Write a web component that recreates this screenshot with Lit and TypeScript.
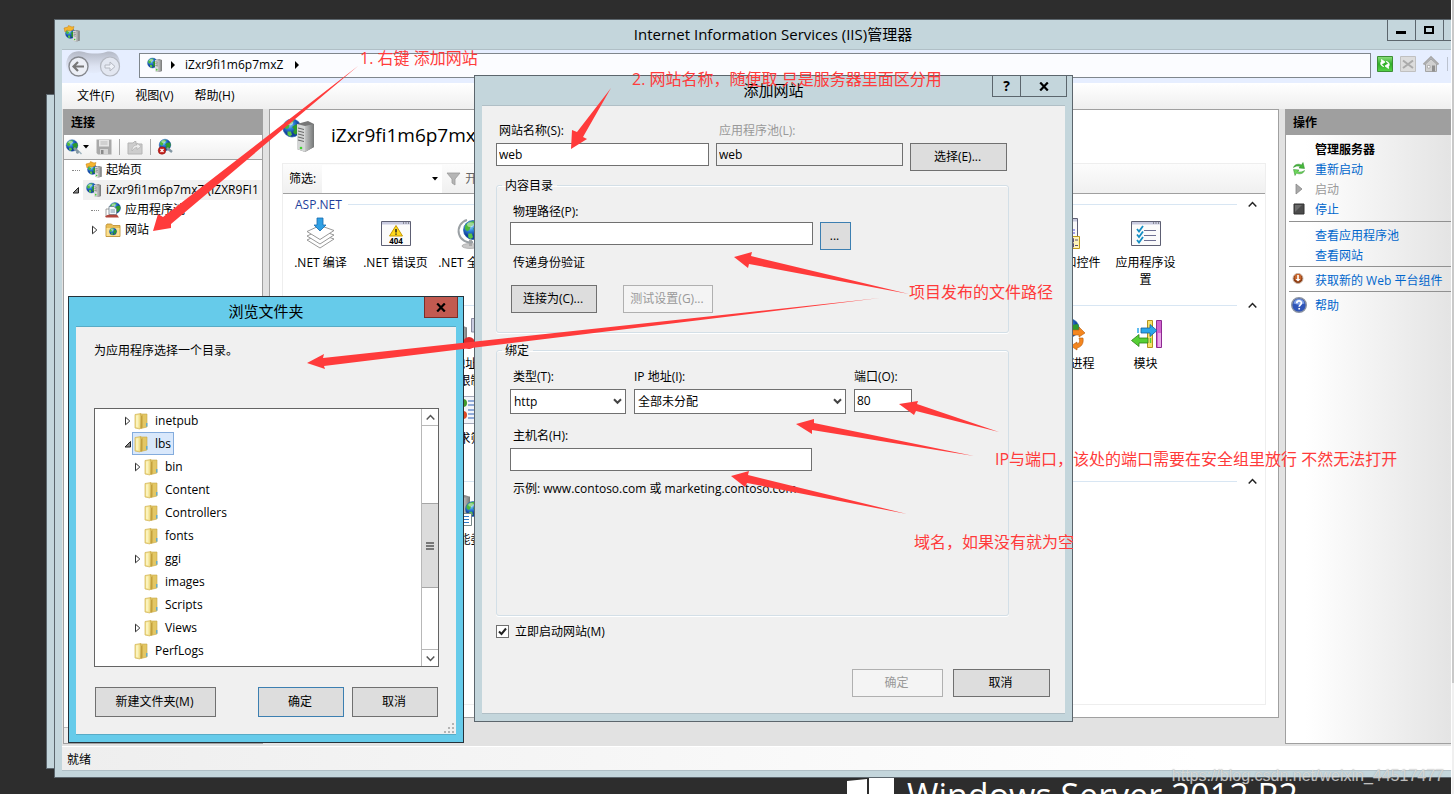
import { LitElement, html, svg, css, nothing } from "lit";
import { customElement } from "lit/decorators.js";
import { classMap } from "lit/directives/class-map.js";

const globe = (cx: number, cy: number, r: number) => svg`
  <g transform="translate(${cx} ${cy}) scale(${r / 8})">
    <circle r="8" fill="url(#sea)" stroke="#1b5fa8" stroke-width=".6"/>
    <path d="M-6.500-4C-4-7 0-8 2-7L0-4-2-3-3 0-5 1-7-1z" fill="#4db83c"/>
    <path d="M3-3L7-3.500 8 0 6 4 3 6 1 4 2 1 0-1z" fill="#2f9a2c"/>
    <path d="M-4 3L-1 3 0 6-2 7.500-4 6z" fill="#58c445"/>
    <ellipse cx="-2" cy="-4.500" rx="3" ry="2" fill="#fff" opacity=".45"/>
  </g>`;

const tower = (x: number, y: number, w: number, h: number) => svg`
  <g transform="translate(${x} ${y}) scale(${w / 8} ${h / 14})">
    <path d="M0 1L5 0 8 1V13L4 14 0 13z" fill="#8d8d8d"/>
    <path d="M0 1L4 1.500V14L0 13z" fill="#d9d9d9"/>
    <path d="M4 1.500L8 1V13L4 14z" fill="url(#steel)"/>
    <path d="M.5 3L3.500 3.500M.5 5L3.500 5.500M.5 7L3.500 7.500" stroke="#6b6b6b" stroke-width=".8"/>
    <circle cx="2" cy="11.500" r=".9" fill="#3fd22c"/>
  </g>`;

const art: Record<string, unknown> = {
  server: svg`${globe(5.5, 6, 5)}${tower(8, 2, 7, 13)}`,
  start: svg`${globe(6.5, 7.5, 5)}${tower(9, 4, 6.5, 11.5)}<path d="M0 2L4 1 4.500-.5 8 1 10 .5 9 4 6 5 3 4 1 6z" fill="#f5b52e" stroke="#c77d0c" stroke-width=".5"/>`,
  connect: svg`${globe(6, 6.5, 5.800)}<path d="M8 9L13 13.500M12 11.500L11 14.500" stroke="#8397a3" stroke-width="2.400"/><path d="M13 12.500L15.500 15" stroke="#9fb3bd" stroke-width="1.500"/>`,
  disconnect: svg`${globe(7, 6, 5.800)}<path d="M9 9L14 13" stroke="#8397a3" stroke-width="2.400"/><circle cx="4" cy="11.500" r="3.800" fill="#c4201c" stroke="#861310" stroke-width=".5"/><path d="M2.500 10L5.500 13M5.500 10L2.500 13" stroke="#fff" stroke-width="1.200"/>`,
  save: svg`<path d="M.5.5H15.500V15.500H2L.5 14z" fill="#a9a9a9"/><path d="M3 1H13V7.500H3z" fill="#e6e6e6"/><path d="M4.500 3H11.500M4.500 5H11.500" stroke="#bbb"/><path d="M4 10H12V15.500H4z" fill="#d4d4d4"/><path d="M5 11H7.500V15H5z" fill="#8a8a8a"/>`,
  openFolder: svg`<path d="M1 4H6L7.500 2.500H9V5H15V15H1z" fill="#cdcdcd" stroke="#b4b4b4"/><path d="M5 12C5 8 7 6 10 6V4L14 7.500 10 10.500V8.500C8 8.500 6.500 10 5 12z" fill="#ececec" stroke="#aaa" stroke-width=".6"/>`,
  pools: svg`${globe(10, 6, 5.500)}<path d="M1 7H8.500V14H1z" fill="#fff" stroke="#888" stroke-width=".8"/><path d="M4 4.500H9L11.500 7V12.500H4z" fill="#f4f8fb" stroke="#6d7f8c" stroke-width=".8"/><path d="M5.500 8H10M5.500 10H10" stroke="#5c7f9b" stroke-width=".8"/><path d="M0 14.500L3 12.800H12L14 15.500H1z" fill="#b3473d"/>`,
  sites: svg`<path d="M1 3.500L2 2H6.500L8 3.500H15V14.500H1z" fill="#e9bd55" stroke="#b98a2b" stroke-width=".8"/><path d="M1.500 6H14.500V14H1.500z" fill="#fbe08f"/>${globe(8, 9.500, 3.600)}`,
  compile: svg`<g fill="#fff" stroke="#8c8c8c" stroke-width=".9"><path d="M2 23L15 17 29 22 15 31z"/><path d="M2 19L15 13 29 18 15 27z"/><path d="M2 14.500L15 8.500 29 13.500 15 22.500z"/></g><path d="M12 1H18V8H21L15 14 9 8H12z" fill="#2fa0e4" stroke="#1669ad" stroke-width=".8"/>`,
  error404: svg`<path d="M1.500 4.500H30.500V28.500H1.500z" fill="#fbfbfb" stroke="#5d5f73"/><path d="M2 5H30V7.500H2z" fill="#c9cbe0"/><path d="M23 6H24M25.500 6H26.500M28 6H29" stroke="#444" stroke-width="1.200"/><path d="M16 8.500L22.500 19H9.500z" fill="#ffd91c" stroke="#c79a06"/><path d="M16 12V15.500M16 16.600V17.800" stroke="#222" stroke-width="1.500"/><text x="16" y="27" text-anchor="middle" class="code">404</text>`,
  globeStand: svg`<ellipse cx="15" cy="29" rx="8" ry="2.500" fill="#c9c9c9" stroke="#999" stroke-width=".6"/><path d="M14 23H17V29H14z" fill="#aaa"/><path d="M12 3A11 11 0 0 0 18 25" fill="none" stroke="#9aa0a4" stroke-width="2"/>${globe(18, 13, 9.500)}`,
  pageControls: svg`<path d="M.5 1.500H22.500V30.500H.5z" fill="#fafafa" stroke="#5d5f73"/><path d="M1 2H22V4.500H1z" fill="#c9cbe0"/><path d="M3 13H20M3 16H20" stroke="#4a4ae0"/><path d="M8.500 19.500H24.500V31.500H8.500z" fill="#fdf4b8" stroke="#bf9a1a"/><path d="M14.500 21.500H18.500V25H14.500zM14.500 26.500H18.500V30H14.500z" fill="#fff" stroke="#5c4f78"/><path d="M20 23H23M20 28.500H23" stroke="#5c4f78"/>`,
  settings: svg`<path d="M1.500 4.500H30.500V28.500H1.500z" fill="#fbfbfb" stroke="#5d5f73"/><path d="M2 5H30V7.500H2z" fill="#c9cbe0"/><path d="M23 6H24M25.500 6H26.500M28 6H29" stroke="#444" stroke-width="1.200"/><path d="M14 13.500H26M14 18.500H26M14 23.500H26" stroke="#6d6f92" stroke-width="1.200"/><path d="M7 12L9 14.500 13 9M7 17.500L9 20 13 14.500M7 23L9 25.500 13 20" fill="none" stroke="#158ec4" stroke-width="1.800"/>`,
  ipLimit: svg`${tower(2, 8, 10, 20)}<path d="M16.500.5H30V14H16.500z" fill="#c9cce0" stroke="#8a8ca0"/><path d="M19 3H29V11H19z" fill="#12129a"/><path d="M21 14H26V17H21z" fill="#999"/><circle cx="14" cy="25" r="6" fill="#e02b2b"/>`,
  worker: svg`${globe(15, 10, 9)}<path d="M14 12L24 12 24 9 30 15 24 19V17H16z" fill="#f4861f" stroke="#b85a08" stroke-width=".6"/><path d="M28 20C29 26 26 29 22 30V32L16 28 22 24V26C25 25 25 23 24 20z" fill="#f4861f" stroke="#b85a08" stroke-width=".6"/>`,
  modules: svg`<path d="M17.500 2.500H22.500V29.500H17.500z" fill="#f5e26a" stroke="#b4941c"/><path d="M26.500 2.500H31.500V29.500H26.500z" fill="#d263cf" stroke="#8d2a91"/><path d="M28 15H31V29H28z" fill="#eba8ea"/><path d="M11 10H20V6.500L27 12.500 20 18.500V15H11z" fill="#2ba6ea" stroke="#145f9d" stroke-width=".8"/><path d="M8 10V15" stroke="#2ba6ea" stroke-width="1.500"/><path d="M18 20H9V16.500L1.500 22.500 9 28.500V25H18z" fill="#56cf35" stroke="#2b8018" stroke-width=".8"/><path d="M20.500 20V25" stroke="#56cf35" stroke-width="1.500"/>`,
  request: svg`<path d="M3.500 3.500H30.500V30.500H3.500z" fill="#f3f5fa" stroke="#a4a8b8"/><path d="M13 8H28M13 12H28M13 17H28M13 21H28M13 25H28" stroke="#2e62b8" stroke-width="1.200"/><circle cx="8" cy="10" r="4" fill="#3e9a2c"/><circle cx="8" cy="22" r="4" fill="#dc4a24"/>`,
  delegate: svg`${tower(1, 1, 14, 26)}${globe(18, 15, 7.5)}<path d="M6.500 19.500H16.500V31.500H6.500z" fill="#fff" stroke="#788"/><path d="M9 22.500H14M9 25.500H14M9 28.500H14" stroke="#2e7ac8"/>`,
  bigServer: svg`${globe(10, 9, 9)}<path d="M15 5L26 2 32 5V28L23 33 15 30z" fill="#777"/><path d="M15 5L23 7V33L15 30z" fill="#d4d6d6"/><path d="M23 7L32 5V28L23 33z" fill="url(#steel)"/><path d="M16 9L22 10.500M16 12L22 13.500M16 15L22 16.500M16 18L22 19.500M16 21L22 22.500" stroke="#666"/><circle cx="19" cy="29" r="1.300" fill="#3fd22c"/>`,
  refresh: svg`<path d="M.5.5H15.500V15.500H.5z" fill="url(#leaf)" stroke="#3c8f35"/><path d="M6.800 10.500C3.500 10 3 7 4.500 5.500V3.500L8 6 4.500 8.500 5 9z M9.200 5.500C12.500 6 13 9 11.500 10.500V12.500L8 10 11.500 7.500 11 7z" fill="#fff" stroke="#fff" stroke-width=".8"/>`,
  stopGrey: svg`<path d="M.5.5H15.500V15.500H.5z" fill="#dcdcdc" stroke="#c0c0c0"/><path d="M3 4.500L13 12M13 4.500L3 12" stroke="#aaa" stroke-width="2"/>`,
  home: svg`<path d="M2.500 8V15.500H13.500V8L8 3z" fill="#d0d0d0" stroke="#a5a5a5"/><path d="M.5 8.500L8 1 15.500 8.500" fill="none" stroke="#a8a8a8" stroke-width="1.800"/><path d="M9 9.500H12V15.500H9z" fill="#8f8f8f"/><path d="M4.500 9.500H7V12H4.500z" fill="#fff" stroke="#999" stroke-width=".6"/>`,
  restart: svg`<path d="M2.500 6.500C3.500 3 8 2.500 10.500 4L12 1.500 13.500 7.500 8 7 9.300 5.500C7 4.500 4.500 5 2.500 6.500z" fill="#47b83c" stroke="#2a8a26" stroke-width=".5"/><path d="M13.500 9.500C12.500 13 8 13.500 5.500 12L4 14.500 2.500 8.500 8 9 6.700 10.500C9 11.500 11.500 11 13.500 9.500z" fill="#6fd85c" stroke="#2a8a26" stroke-width=".5"/>`,
  play: svg`<path d="M5 3L11 8 5 13z" fill="#a9a9a9" stroke="#888" stroke-width=".8"/>`,
  stop: svg`<path d="M3 3H13V13H3z" fill="#4b4b4b" stroke="#333"/><path d="M4 11L11 4H4z" fill="#6b6b6b"/>`,
  get: svg`<circle cx="7" cy="6.500" r="5" fill="#8e3e14" stroke="#c9b5a8" stroke-width="1"/><circle cx="7" cy="5.500" r="3.400" fill="#c9672d"/><path d="M6.200 3H7.800V7H9.500L7 9.500 4.500 7H6.200z" fill="#fff"/>`,
  help: svg`<circle cx="8" cy="8" r="7.300" fill="#2f55b8" stroke="#8b93a2" stroke-width="1.400"/><path d="M2.500 6.500A5.600 5.600 0 0 1 13.500 6.500C10 8 6 8 2.500 6.500z" fill="#7e9fe6"/><path d="M5.800 6.200C5.800 3.200 10.400 3.200 10.400 6 10.400 7.800 8.200 7.800 8.200 9.800M8.200 11V12.600" fill="none" stroke="#fff" stroke-width="1.700"/>`,
  folder: svg`<path d="M1 1.500L7 .5V14L6 16 1 15z" fill="#f1df8b" stroke="#d1b354" stroke-width=".7"/><path d="M6 1L13 1V14L7 15.500V3z" fill="#e3c765" stroke="#c8a746" stroke-width=".6"/><path d="M2 2.500L4.500 2V14.500L2 14z" fill="#fbf3bd"/><path d="M7 3L8.500 2V14.500L6.500 16z" fill="#c3a03c"/><path d="M12.800 10V13.500" stroke="#49a7e0" stroke-width="1.200"/>`,
  funnel: svg`<path d="M1 2H14L9 8V14L6 12V8z" fill="#b5b5b5" stroke="#9a9a9a" stroke-width=".8"/>`,
};

const icon = (name: string, size = 16) =>
  html`<svg class="icon" width=${size} height=${size} viewBox="0 0 ${size} ${size}" aria-hidden="true">${art[name]}</svg>`;

const chevron = (dir: "up" | "down") =>
  html`<svg width="9" height="7" viewBox="0 0 9 7" aria-hidden="true"><path d=${dir === "up" ? "M.7 5.500L4.500 1.500 8.300 5.500" : "M.7 1.500L4.500 5.500 8.300 1.500"} fill="none" stroke="currentColor" stroke-width="1.500"/></svg>`;

const twisty = (state?: string) =>
  html`<svg class="icon" width="8" height="10" viewBox="0 0 8 10" aria-hidden="true">${
    state === "closed" ? svg`<path d="M1.500 1.200L5.800 5 1.500 8.800z" fill="#fff" stroke="#333"/>`
    : state === "open" ? svg`<path d="M6.500 2.500V8H1z" fill="#8a8a8a" stroke="#222"/>` : nothing}</svg>`;

const closeMark = html`<svg width="10" height="9" viewBox="0 0 10 9" aria-hidden="true"><path d="M1.200.5L8.800 8.500M8.800.5L1.200 8.500" stroke="#000" stroke-width="2.200"/></svg>`;

interface Tile { col: number; row?: number; icon: string; label: string; }
const groups: { title: string; tiles: Tile[] }[] = [
  { title: "ASP.NET", tiles: [
    { col: 1, icon: "compile", label: ".NET 编译" },
    { col: 2, icon: "error404", label: ".NET 错误页" },
    { col: 3, icon: "globeStand", label: ".NET 全球化" },
    { col: 11, icon: "pageControls", label: "页面和控件" },
    { col: 12, icon: "settings", label: "应用程序设\n置" },
  ] },
  { title: "IIS", tiles: [
    { col: 3, icon: "ipLimit", label: "IP 地址和域\n限制" },
    { col: 11, icon: "worker", label: "工作进程" },
    { col: 12, icon: "modules", label: "模块" },
    { col: 3, row: 2, icon: "request", label: "请求筛选" },
  ] },
  { title: "管理", tiles: [{ col: 3, icon: "delegate", label: "功能委派" }] },
];

const folders = [
  { name: "inetpub", state: "closed" },
  { name: "lbs", state: "open", selected: true },
  { name: "bin", state: "closed", deep: true },
  { name: "Content", deep: true },
  { name: "Controllers", deep: true },
  { name: "fonts", deep: true },
  { name: "ggi", state: "closed", deep: true },
  { name: "images", deep: true },
  { name: "Scripts", deep: true },
  { name: "Views", state: "closed", deep: true },
  { name: "PerfLogs" },
  { name: "" },
];

const arrows = [
  "153,231 158,214 163,217 358,66 171,224 171,228",
  "571,149 572,130 577,132 611,88 583,137 587,139",
  "734,257 752,252 751,256 909,294 749,264 748,268",
  "307,363 324,354 323,358 880,298 324,366 325,369",
  "899,404 918,401 917,404 999,432 916,411 914,415",
  "796,424 814,419 814,423 974,456 812,430 812,434",
  "731,476 749,471 748,475 907,514 747,483 745,487",
];
const notes = [
  { x: 360, y: 64, text: "1. 右键 添加网站" },
  { x: 632, y: 85, text: "2. 网站名称，随便取 只是服务器里面区分用" },
  { x: 909, y: 298, text: "项目发布的文件路径" },
  { x: 995, y: 465, text: "IP与端口，该处的端口需要在安全组里放行 不然无法打开" },
  { x: 914, y: 548, text: "域名，如果没有就为空" },
];

@customElement("app-root")
export class AppRoot extends LitElement {
  static styles = css`
    :host { display: block; position: relative; height: 100vh; overflow: hidden; background: #2d2d2d; color: #000;
      font: 12px/17px "Open Sans", "Noto Sans CJK SC", sans-serif; }
    * { box-sizing: border-box; }
    button, input, select { font: inherit; color: inherit; margin: 0; border-radius: 0; }
    h1, h2, p, ul { margin: 0; padding: 0; font-weight: 400; list-style: none; }
    a { color: #0066cc; text-decoration: none; }
    .icon { flex: none; overflow: visible; display: block; }
    .defs { position: absolute; width: 0; height: 0; }
    .code { font: bold 8px "Open Sans", sans-serif; }

    .brand { position: absolute; left: 847px; bottom: -30px; display: flex; gap: 13px; color: #fff; align-items: flex-start; white-space: nowrap; }
    .brand p { font-size: 34px; line-height: 38px; }
    .behind { position: absolute; left: 46px; top: 94px; bottom: 25px; width: 60px; background: #c4d6dc; border: 1px solid #5c666d; }

    .window { position: absolute; display: flex; flex-direction: column; background: #c4d6dc; border: 1px solid #5c666d; }
    .titlebar { display: grid; grid-template-columns: 1fr auto 1fr; height: 29px; flex: none; }
    .titlebar h1 { grid-column: 2; font-size: 15px; line-height: 28px; white-space: nowrap; }
    .sys { grid-column: 3; display: flex; justify-content: flex-end; align-items: flex-start; margin-right: -2px; }
    .sys button { display: grid; place-items: center; width: 28px; height: 21px; padding: 0; background: none; border: 1px solid #5c666d; border-width: 0 0 1px 1px; font-weight: 700; font-size: 14px; line-height: 18px; }
    .sys button.wide { width: 47px; border-right-width: 1px; }
    .main .sys { margin-right: -6px; }
    .client { flex: 1; min-height: 0; display: flex; flex-direction: column; border: 1px solid #b0bfc6; border-width: 1px 0; background: #f0f0f0; }

    .main { left: 54px; top: 19px; right: -38px; bottom: 16px; padding: 0 7px 6px; }
    .main .titlebar .icon { margin: 6px 0 0 2px; }
    .nav { display: flex; align-items: center; height: 33px; flex: none; padding: 0 8px 2px 0; background: #e6eeff; }
    .travel { width: 62px; height: 33px; flex: none; }
    .address { flex: 1; display: flex; align-items: center; gap: 8px; height: 25px; margin: 0 6px 0 15px; padding: 0 0 2px 7px; border: 1px solid #7f868c; background: #fbfcff; }
    .address span { padding: 0 4px 0 2px; }
    .navtools { display: flex; gap: 7px; width: 99px; padding-bottom: 3px; }
    .navtools i { width: 1px; height: 14px; margin: 1px 0 0 1px; background: #bcc3cf; }
    .navtools button, .tools button { padding: 0; border: 0; background: none; display: flex; align-items: center; }
    .menu { display: flex; gap: 21px; padding: 0 15px; height: 26px; line-height: 26px; flex: none; background: linear-gradient(#fff, #efefef); }
    .menu button { border: 0; padding: 0; background: none; }
    .panes { flex: 1; min-height: 0; display: grid; grid-template-columns: 200px minmax(0, 1fr) 199px; gap: 6px; background: #e2e2e2; padding: 0 0 2px 1px; }
    .head { height: 26px; flex: none; padding-left: 7px; line-height: 27px; background: #9f9f9f; font-weight: 600; font-size: 12px; }
    .left { display: flex; flex-direction: column; border: 1px solid #a0a0a0; border-top: 0; background: #fff; min-height: 0; overflow: hidden; }
    .tools { display: flex; align-items: center; gap: 7px; height: 25px; flex: none; padding-left: 2px; border-bottom: 1px solid #a0a0a0; background: linear-gradient(#fff, #efefef); }
    .tools i { width: 1px; height: 16px; background: #a9a9a9; }
    .tree { flex: 1; }
    .tree li { display: flex; align-items: center; gap: 3px; height: 20px; padding-left: 8px; white-space: nowrap; }
    .tree li > span { display: flex; align-items: center; height: 20px; gap: 4px; padding: 0 0 1px 3px; }
    .tree .dots { width: 8px; height: 1px; border-top: 1px dotted #888; }
    .tree .child { padding-left: 27px; }
    .tree .sel { flex: 1; background: #f0f0f0; }
    .hscroll { height: 16px; flex: none; border-top: 1px solid #bbb; background: #eee; }

    .center { display: flex; flex-direction: column; margin-bottom: 26px; padding: 0 12px 12px; border: 1px solid #a0a0a0; background: #fff; min-height: 0; }
    .heading { display: flex; align-items: center; gap: 15px; height: 53px; padding-bottom: 2px; }
    .heading h2 { padding-bottom: 2px; font-size: 19px; line-height: 26px; white-space: nowrap; }
    .features { flex: 1; min-height: 0; overflow: hidden; border: 1px solid #eee; }
    .filter { display: flex; align-items: center; height: 30px; margin-bottom: 1px; padding-left: 6px; border-bottom: 1px solid #a0a0a0; background: linear-gradient(#fcfcfc, #f0f0f0); }
    .filter input { width: 106px; height: 28px; margin-left: 6px; border: 0; background: #fff; padding: 0 4px; }
    .filter .drop { display: grid; place-items: center; width: 14px; height: 28px; padding: 0; border: 0; background: #fff; }
    .filter .go { display: flex; gap: 3px; align-items: center; border: 0; background: none; padding: 0 4px; color: #666; }
    .group { padding-bottom: 8px; }
    .group h3 { display: flex; align-items: center; gap: 6px; height: 18px; margin: 0; padding: 0 7px 0 12px; font-weight: 400; font-size: 12px; color: #1f3f9c; }
    .group h3 i { flex: 1; height: 1px; margin-right: 3px; background: #d8e6f3; }
    .group h3 button { display: grid; place-items: center; border: 0; padding: 0; width: 12px; height: 16px; background: none; color: #222; }
    .grid { display: grid; grid-template-columns: repeat(12, 75px); grid-auto-rows: 75px; }
    .tile { display: flex; flex-direction: column; align-items: center; gap: 5px; padding-top: 4px; text-align: center; color: #000; white-space: pre; }

    .right { display: flex; flex-direction: column; border: 1px solid #a0a0a0; border-top: 0; background: linear-gradient(90deg, #fff 10%, #dedede); }
    .right ul { padding: 4px 0 2px 5px; }
    .right li { display: flex; align-items: center; gap: 8px; height: 20px; white-space: nowrap; }
    .right ul + ul { border-top: 1px solid #919191; margin-left: 3px; padding: 3px 0 1px 2px; }
    .right li b, .right li .bare { padding-left: 24px; }
    .right li b { font-weight: 600; }
    .right .off { color: #999; }
    .status { height: 24px; flex: none; padding-left: 5px; line-height: 26px; border-top: 1px solid #fff; background: linear-gradient(90deg, #eee, #fff 80%); }

    .box { height: 23px; padding: 0 2px; border: 1px solid #707070; background: #fff; width: 100%; }
    .box[readonly] { background: #f0f0f0; }
    .btn { height: 28px; padding: 0 2px 1px 0; border: 1px solid #707070; background: #ddd; }
    .btn:disabled { border-color: #b0b0b0; background: #f4f4f4; color: #999; }
    .btn.focus { border-color: #3c7fb1; }

    .add { left: 474px; top: 75px; width: 599px; padding: 0 7px 7px; }
    .form { padding: 16px 0 16px 14px; }
    .add label.cap, .note { display: block; padding-left: 3px; white-space: nowrap; }
    .faded { color: #999; }
    .top { display: grid; grid-template-columns: 213px 187px 97px; column-gap: 7px; row-gap: 4px; align-items: start; }
    fieldset { width: 513px; min-width: 0; margin: 6px 0 0; padding: 9px 13px 0; border: 1px solid #d3dfe7; border-radius: 3px; box-shadow: 0 1px #fff, inset 0 1px #fff; }
    legend { padding: 0 4px 0 3px; margin-left: -8px; }
    .path { display: flex; align-items: flex-start; gap: 7px; margin: 2px 0 4px; }
    .path .box { width: 303px; }
    .path .btn { width: 31px; }
    .pair { display: flex; gap: 26px; padding: 14px 0 19px 1px; }
    .pair .connect { width: 86px; }
    .pair .test { width: 90px; }
    .bind { margin-top: 9px; padding-bottom: 118px; }
    .fields { display: grid; grid-template-columns: 116px 212px 58px; column-gap: 8px; row-gap: 4px; margin-bottom: 13px; }
    .fields label.cap { padding-left: 0; }
    .add label.first { padding-left: 3px; }
    select { appearance: none; height: 25px; padding: 0 20px 0 3px; border: 1px solid #707070;
      background: #fff url("data:image/svg+xml,%3Csvg xmlns='http://www.w3.org/2000/svg' width='9' height='7'%3E%3Cpath d='M1 1.200L4.500 4.800 8 1.200' fill='none' stroke='%23444' stroke-width='2'/%3E%3C/svg%3E") no-repeat right 3px center; }
    .host { width: 302px; margin: 4px 0 9px; display: block; }
    .check { display: flex; align-items: center; gap: 6px; margin-top: 7px; }
    .check input { appearance: none; width: 13px; height: 13px; border: 1px solid #707070;
      background: #fff url("data:image/svg+xml,%3Csvg xmlns='http://www.w3.org/2000/svg' width='11' height='11'%3E%3Cpath d='M2 5.500L4.500 8 9 2.500' fill='none' stroke='%23222' stroke-width='2'/%3E%3C/svg%3E") center no-repeat; }
    .foot { display: flex; justify-content: flex-end; gap: 10px; padding: 29px 15px 0 0; }
    .foot .ok { width: 91px; }
    .foot .cancel { width: 97px; }

    .browse { left: 68px; top: 296px; width: 396px; padding: 0 7px 7px; background: #66cbea; border-color: #26323a; }
    .browse .client { border-color: #58abc6; padding: 15px 17px 17px 18px; }
    .browse .sys button { width: 34px; background: #c25a50; border-color: #7b2e28; border-right-width: 1px; }
    .list { display: flex; height: 259px; margin-top: 49px; border: 1px solid #646464; background: #fff; }
    .list ul { flex: 1; overflow: hidden; padding-left: 29px; }
    .list li { display: flex; align-items: center; height: 23px; }
    .list li.deep { padding-left: 10px; }
    .list li > span { display: flex; align-items: center; gap: 5px; height: 23px; padding: 0 4px 0 1px; border: 1px solid transparent; white-space: nowrap; }
    .list li.selected > span { border-color: #84acdd; background: #d9e8fb; padding-right: 2px; }
    .bar { display: flex; flex-direction: column; width: 17px; border: 1px solid #b8b8b8; border-width: 0 0 0 1px; color: #555; background: #fff; }
    .bar button { display: grid; place-items: center; height: 17px; padding: 0; border: 1px solid #b8b8b8; border-width: 0 0 1px; background: #fff; color: #555; }
    .bar .down { border-width: 1px 0 0; }
    .thumb { display: grid; place-items: center; height: 85px; margin: 77px 0 auto; border: 1px solid #a6a6a6; border-width: 1px 0; background: #dcdcdc; }
    .actions { display: flex; gap: 8px; padding: 20px 1px 0 1px; }
    .actions .btn { height: 30px; width: 86px; }
    .actions .new { width: 121px; margin-right: auto; }
    .grip { position: absolute; right: 9px; bottom: 9px; }

    .marks { position: absolute; inset: 0; width: 100%; height: 100%; pointer-events: none; fill: #ff3b3b; }
    .marks text { font-size: 16px; }
    .watermark { position: absolute; right: 10px; bottom: 8px; font: 16px/20px "Liberation Sans", sans-serif; color: rgba(230, 230, 230, .75); text-shadow: 0 0 1px rgba(120, 120, 120, .5); }
    .page-scroll { position: absolute; inset: 0 0 0 auto; width: 3px; background: #f0f0f0; border-left: 1px solid #fff; }
    .page-scroll i { display: block; height: 86%; background: #c9c9c9; }
  `;

  private renderGroups() {
    return groups.map((g) => html`
      <section class="group">
        <h3>${g.title}<i></i><button aria-label="折叠">${chevron("up")}</button></h3>
        <div class="grid">${g.tiles.map((t) => html`
          <a class="tile" href="#" style="grid-column:${t.col};grid-row:${t.row ?? 1}">${icon(t.icon, 32)}<span>${t.label}</span></a>`)}</div>
      </section>`);
  }

  private renderMain() {
    return html`
      <section class="window main">
        <header class="titlebar">
          ${icon("start", 16)}
          <h1>Internet Information Services (IIS)管理器</h1>
          <div class="sys">
            <button aria-label="最小化"><svg width="11" height="10" viewBox="0 0 11 10"><path d="M0 6H10V9H0z"/></svg></button>
            <button aria-label="最大化"><svg width="11" height="10" viewBox="0 0 11 10"><path d="M1 2H9V8H1z" fill="none" stroke="#000" stroke-width="2"/></svg></button>
            <button class="wide" aria-label="关闭">${closeMark}</button>
          </div>
        </header>
        <div class="client">
          <nav class="nav">
            <svg class="travel" viewBox="0 0 62 33" aria-hidden="true">
              <path d="M4 16C5 3 14 1 22 3 28 5 38 5 44 3 52 1 58 6 58 16L58 20C56 28 44 28 40 22 35 25 28 25 24 22 20 29 7 29 5 20z" fill="url(#gloss)"/>
              <circle cx="16.500" cy="17.500" r="9.500" fill="#eceff6" stroke="#85888e" stroke-width="1.400"/>
              <path d="M22 17.500H12M16 13L11.500 17.500 16 22" fill="none" stroke="#777" stroke-width="2.200"/>
              <circle cx="48" cy="17.500" r="9.500" fill="#e3e7f1" stroke="#b4b8c1" stroke-width="1.200"/>
              <path d="M43 16H48V13L53 17.500 48 22V19H43z" fill="#eef1f8" stroke="#b4b8c1"/>
            </svg>
            <div class="address">${icon("server")}
              <svg width="4" height="8" viewBox="0 0 4 8"><path d="M0 0L4 4 0 8z"/></svg>
              <span>iZxr9fi1m6p7mxZ</span>
              <svg width="4" height="8" viewBox="0 0 4 8"><path d="M0 0L4 4 0 8z"/></svg>
            </div>
            <div class="navtools">
              <button aria-label="刷新">${icon("refresh")}</button>
              <button aria-label="停止">${icon("stopGrey")}</button>
              <button aria-label="主页">${icon("home")}</button><i></i>
            </div>
          </nav>
          <div class="menu"><button>文件(F)</button><button>视图(V)</button><button>帮助(H)</button></div>
          <div class="panes">
            <aside class="left">
              <h2 class="head">连接</h2>
              <div class="tools">
                <button aria-label="连接">${icon("connect")}<svg width="7" height="4" viewBox="0 0 7 4"><path d="M1 0H7L4 3.500z"/></svg></button>
                <button aria-label="保存">${icon("save")}</button><i></i>
                <button aria-label="打开">${icon("openFolder")}</button><i></i>
                <button aria-label="断开">${icon("disconnect")}</button>
              </div>
              <ul class="tree">
                <li><i class="dots"></i><span>${icon("start")}起始页</span></li>
                <li>${twisty("open")}<span class="sel">${icon("server")}iZxr9fi1m6p7mxZ (IZXR9FI1</span></li>
                <li class="child"><i class="dots"></i><span>${icon("pools")}应用程序池</span></li>
                <li class="child">${twisty("closed")}<span>${icon("sites")}网站</span></li>
              </ul>
              <div class="hscroll"></div>
            </aside>
            <main class="center">
              <header class="heading">${icon("bigServer", 34)}<h2>iZxr9fi1m6p7mxZ 主页</h2></header>
              <div class="features">
                <div class="filter">
                  <label for="filter">筛选:</label><input id="filter">
                  <button class="drop" aria-label="展开"><svg width="6" height="4" viewBox="0 0 6 4"><path d="M0 0H6L3 3.500z"/></svg></button>
                  <button class="go">${icon("funnel")}开始(G)</button>
                </div>
                ${this.renderGroups()}
              </div>
            </main>
            <aside class="right">
              <h2 class="head">操作</h2>
              <ul>
                <li><b>管理服务器</b></li>
                <li>${icon("restart")}<a href="#">重新启动</a></li>
                <li class="off">${icon("play")}启动</li>
                <li>${icon("stop")}<a href="#">停止</a></li>
              </ul>
              <ul>
                <li><a class="bare" href="#">查看应用程序池</a></li>
                <li><a class="bare" href="#">查看网站</a></li>
              </ul>
              <ul><li>${icon("get")}<a href="#">获取新的 Web 平台组件</a></li></ul>
              <ul><li>${icon("help")}<a href="#">帮助</a></li></ul>
            </aside>
          </div>
          <footer class="status">就绪</footer>
        </div>
      </section>`;
  }

  private renderAdd() {
    return html`
      <section class="window add" role="dialog" aria-label="添加网站">
        <header class="titlebar"><h1>添加网站</h1>
          <div class="sys"><button aria-label="帮助">?</button><button class="wide" aria-label="关闭">${closeMark}</button></div>
        </header>
        <form class="client form">
          <div class="top">
            <label class="cap" for="site">网站名称(S):</label><label class="cap faded" for="pool">应用程序池(L):</label><span></span>
            <input class="box" id="site" value="web"><input class="box" id="pool" value="web" readonly>
            <button type="button" class="btn">选择(E)...</button>
          </div>
          <fieldset>
            <legend>内容目录</legend>
            <label class="cap" for="path">物理路径(P):</label>
            <div class="path"><input class="box" id="path"><button type="button" class="btn focus">...</button></div>
            <p class="note">传递身份验证</p>
            <div class="pair"><button type="button" class="btn connect">连接为(C)...</button><button type="button" class="btn test" disabled>测试设置(G)...</button></div>
          </fieldset>
          <fieldset class="bind">
            <legend>绑定</legend>
            <div class="fields">
              <label class="cap first" for="type">类型(T):</label><label class="cap" for="ip">IP 地址(I):</label><label class="cap" for="port">端口(O):</label>
              <select id="type"><option>http</option></select>
              <select id="ip"><option>全部未分配</option></select>
              <input class="box" id="port" value="80">
            </div>
            <label class="cap" for="host">主机名(H):</label>
            <input class="box host" id="host">
            <p class="note">示例: www.contoso.com 或 marketing.contoso.com</p>
          </fieldset>
          <label class="check"><input type="checkbox" checked>立即启动网站(M)</label>
          <div class="foot"><button type="button" class="btn ok" disabled>确定</button><button type="button" class="btn cancel">取消</button></div>
        </form>
      </section>`;
  }

  private renderBrowse() {
    return html`
      <section class="window browse" role="dialog" aria-label="浏览文件夹">
        <header class="titlebar"><h1>浏览文件夹</h1><div class="sys"><button aria-label="关闭">${closeMark}</button></div></header>
        <div class="client">
          <p>为应用程序选择一个目录。</p>
          <div class="list">
            <ul>${folders.map((f) => html`
              <li class=${classMap({ deep: !!f.deep, selected: !!f.selected })}>${twisty(f.state)}<span>${icon("folder")}${f.name}</span></li>`)}
            </ul>
            <div class="bar">
              <button aria-label="向上">${chevron("up")}</button>
              <div class="thumb"><svg width="8" height="8" viewBox="0 0 8 8"><path d="M0 1H8M0 4H8M0 7H8" stroke="#555" stroke-width="1.500"/></svg></div>
              <button class="down" aria-label="向下">${chevron("down")}</button>
            </div>
          </div>
          <div class="actions"><button class="btn new">新建文件夹(M)</button><button class="btn focus">确定</button><button class="btn">取消</button></div>
        </div>
        <svg class="grip" width="10" height="10" viewBox="0 0 10 10" fill="#b4b4b4"><path d="M8 0h2v2H8zM4 4h2v2H4zM8 4h2v2H8zM0 8h2v2H0zM4 8h2v2H4zM8 8h2v2H8z"/></svg>
      </section>`;
  }

  render() {
    return html`
      <svg class="defs" aria-hidden="true"><defs>
        <radialGradient id="sea" cx=".35" cy=".3"><stop offset="0" stop-color="#9fdcf7"/><stop offset=".5" stop-color="#2f86dc"/><stop offset="1" stop-color="#123f9c"/></radialGradient>
        <linearGradient id="steel"><stop offset="0" stop-color="#c4c6c6"/><stop offset="1" stop-color="#747676"/></linearGradient>
        <linearGradient id="leaf" x2="0" y2="1"><stop offset="0" stop-color="#8fe07f"/><stop offset=".5" stop-color="#2fae28"/><stop offset="1" stop-color="#57d348"/></linearGradient>
        <linearGradient id="gloss" x2="0" y2="1"><stop offset="0" stop-color="#b4b9c6"/><stop offset=".6" stop-color="#dde3f2"/><stop offset="1" stop-color="#e6eeff"/></linearGradient>
      </defs></svg>
      <div class="brand">
        <svg width="47" height="48" viewBox="0 0 47 48" fill="#fff"><path d="M0 5L20 3V24H0zM22 2L47 0V24H22zM0 26H20V46L0 43zM22 26H47V48L22 46z"/></svg>
        <p>Windows Server 2012 R2</p>
      </div>
      <div class="behind"></div>
      ${this.renderMain()} ${this.renderAdd()} ${this.renderBrowse()}
      <svg class="marks">
        ${arrows.map((p) => svg`<polygon points=${p}/>`)}
        ${notes.map((n) => svg`<text x=${n.x} y=${n.y}>${n.text}</text>`)}
      </svg>
      <div class="watermark">https://blog.csdn.net/weixin_44517477</div>
      <div class="page-scroll"><i></i></div>`;
  }
}
